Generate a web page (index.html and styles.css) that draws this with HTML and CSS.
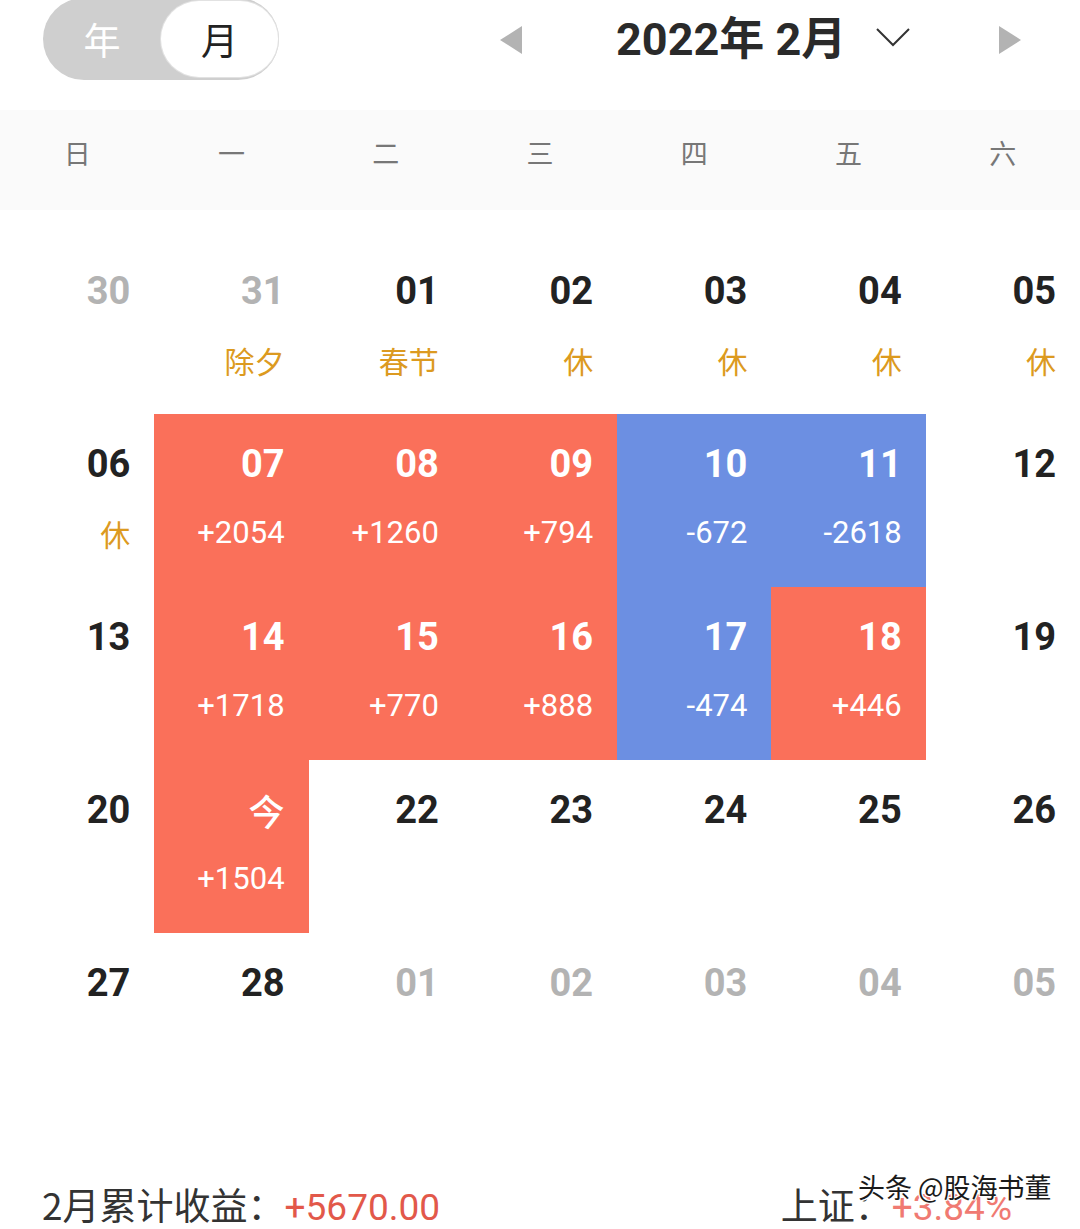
FILE: index.html
```html
<!DOCTYPE html>
<html lang="zh-CN">
<head>
<meta charset="utf-8">
<title>收益日历</title>
<link rel="stylesheet" href="styles.css">
</head>
<body>
<div class="page">
  <header class="topbar">
    <div class="toggle">
      <span class="toggle-opt off">年</span>
      <span class="toggle-opt on">月</span>
    </div>
    <svg class="arrow arrow-left" width="22" height="28" viewBox="0 0 22 28"><polygon points="22,0 22,28 0,14" fill="#b3b3b3"/></svg>
    <div class="title">2022年 2月</div>
    <svg class="chevron" width="34" height="20" viewBox="0 0 34 20"><polyline points="1,2 17,18 33,2" fill="none" stroke="#333" stroke-width="2"/></svg>
    <svg class="arrow arrow-right" width="22" height="28" viewBox="0 0 22 28"><polygon points="0,0 0,28 22,14" fill="#b3b3b3"/></svg>
  </header>

  <div class="weekdays">
    <span>日</span><span>一</span><span>二</span><span>三</span><span>四</span><span>五</span><span>六</span>
  </div>

  <div class="grid">
    <div class="cell muted"><div class="num">30</div></div>
    <div class="cell muted"><div class="num">31</div><div class="sub hol">除夕</div></div>
    <div class="cell"><div class="num">01</div><div class="sub hol">春节</div></div>
    <div class="cell"><div class="num">02</div><div class="sub hol">休</div></div>
    <div class="cell"><div class="num">03</div><div class="sub hol">休</div></div>
    <div class="cell"><div class="num">04</div><div class="sub hol">休</div></div>
    <div class="cell"><div class="num">05</div><div class="sub hol">休</div></div>

    <div class="cell"><div class="num">06</div><div class="sub hol">休</div></div>
    <div class="cell up"><div class="num">07</div><div class="sub">+2054</div></div>
    <div class="cell up"><div class="num">08</div><div class="sub">+1260</div></div>
    <div class="cell up"><div class="num">09</div><div class="sub">+794</div></div>
    <div class="cell down"><div class="num">10</div><div class="sub">-672</div></div>
    <div class="cell down"><div class="num">11</div><div class="sub">-2618</div></div>
    <div class="cell"><div class="num">12</div></div>

    <div class="cell"><div class="num">13</div></div>
    <div class="cell up"><div class="num">14</div><div class="sub">+1718</div></div>
    <div class="cell up"><div class="num">15</div><div class="sub">+770</div></div>
    <div class="cell up"><div class="num">16</div><div class="sub">+888</div></div>
    <div class="cell down"><div class="num">17</div><div class="sub">-474</div></div>
    <div class="cell up"><div class="num">18</div><div class="sub">+446</div></div>
    <div class="cell"><div class="num">19</div></div>

    <div class="cell"><div class="num">20</div></div>
    <div class="cell up"><div class="num today">今</div><div class="sub">+1504</div></div>
    <div class="cell"><div class="num">22</div></div>
    <div class="cell"><div class="num">23</div></div>
    <div class="cell"><div class="num">24</div></div>
    <div class="cell"><div class="num">25</div></div>
    <div class="cell"><div class="num">26</div></div>

    <div class="cell"><div class="num">27</div></div>
    <div class="cell"><div class="num">28</div></div>
    <div class="cell muted"><div class="num">01</div></div>
    <div class="cell muted"><div class="num">02</div></div>
    <div class="cell muted"><div class="num">03</div></div>
    <div class="cell muted"><div class="num">04</div></div>
    <div class="cell muted"><div class="num">05</div></div>
  </div>

  <footer class="footer">
    <div class="total">2月累计收益：<span class="red">+5670.00</span></div>
    <div class="index">上证：<span class="red light">+3.84%</span></div>
    <div class="watermark">头条 @股海书董</div>
  </footer>
</div>
</body>
</html>
```

FILE: styles.css
```css
html, body {
  margin: 0;
  padding: 0;
  background: #ffffff;
}
body {
  font-family: Roboto, "Noto Sans CJK SC", "Noto Sans", sans-serif;
  color: #222;
}
.page {
  width: 1080px;
  height: 1229px;
  overflow: hidden;
  position: relative;
}

/* top bar */
.topbar {
  height: 110px;
  display: flex;
  align-items: flex-start;
}
.toggle {
  margin-left: 43px;
  margin-top: -2px;
  width: 236px;
  height: 82px;
  border-radius: 41px;
  background: #cfcfcf;
  display: flex;
  align-items: center;
  box-sizing: border-box;
  padding: 3px 1px 3px 0;
}
.toggle-opt {
  font-family: "Noto Sans CJK SC", sans-serif;
  font-size: 37px;
  line-height: 76px;
  height: 76px;
  text-align: center;
}
.toggle-opt.off {
  width: 118px;
  color: #ffffff;
}
.toggle-opt.on {
  width: 117px;
  color: #222;
  background: #ffffff;
  border-radius: 38px;
  box-shadow: 0 0 0 1px #e2e2e2;
}
.arrow-left {
  margin-left: 221px;
  margin-top: 26px;
}
.title {
  margin-left: 94px;
  font-size: 45px;
  font-weight: 700;
  line-height: 80px;
  color: #2a2a2a;
  white-space: nowrap;
}
.chevron {
  margin-left: 30px;
  margin-top: 27px;
}
.arrow-right {
  margin-left: 89px;
  margin-top: 26px;
}

/* weekdays */
.weekdays {
  height: 100px;
  box-sizing: border-box;
  padding-top: 23px;
  background: #fafafa;
  display: grid;
  grid-template-columns: repeat(7, 1fr);
  align-items: start;
  justify-items: center;
  font-family: "Noto Sans CJK SC", sans-serif;
  font-size: 27px;
  line-height: 40px;
  color: #777;
}

/* grid */
.grid {
  margin-top: 31px;
  display: grid;
  grid-template-columns: repeat(7, 1fr);
  grid-auto-rows: 173px;
}
.cell {
  display: flex;
  flex-direction: column;
  align-items: flex-end;
  padding: 28px 24px 0 0;
  box-sizing: border-box;
}
.num {
  font-size: 38px;
  font-weight: 700;
  line-height: 44px;
  color: #222;
}
.num.today {
  font-family: "Noto Sans CJK SC", sans-serif;
  font-weight: 500;
  font-size: 36px;
}
.sub {
  margin-top: 27px;
  font-size: 31px;
  line-height: 40px;
  color: #fff;
}
.sub.hol {
  font-family: "Noto Sans CJK SC", sans-serif;
  color: #dc9a20;
  font-size: 30px;
}
.muted .num {
  color: #b3b3b3;
}
.up {
  background: #fa705a;
}
.down {
  background: #6c8fe2;
}
.up .num, .down .num {
  color: #fff;
}

/* footer */
.footer {
  margin-top: 78px;
  display: flex;
  align-items: center;
  height: 44px;
  line-height: 44px;
  font-family: "Noto Sans CJK SC", Roboto, sans-serif;
  font-size: 37px;
  color: #333;
  position: relative;
}
.total {
  margin-left: 42px;
}
.index {
  margin-left: auto;
  margin-right: 68px;
}
.red {
  font-family: Roboto, sans-serif;
  color: #e2584a;
}
.red.light {
  color: #f07a72;
}
.watermark {
  position: absolute;
  left: 858px;
  top: -14px;
  line-height: 34px;
  font-family: "Noto Sans CJK SC", sans-serif;
  font-size: 27px;
  color: #1a1a1a;
  text-shadow: 1px 1px 0 #fff, -1px -1px 0 #fff, 1px -1px 0 #fff, -1px 1px 0 #fff, 0 0 2px #fff;
  white-space: nowrap;
}
```
